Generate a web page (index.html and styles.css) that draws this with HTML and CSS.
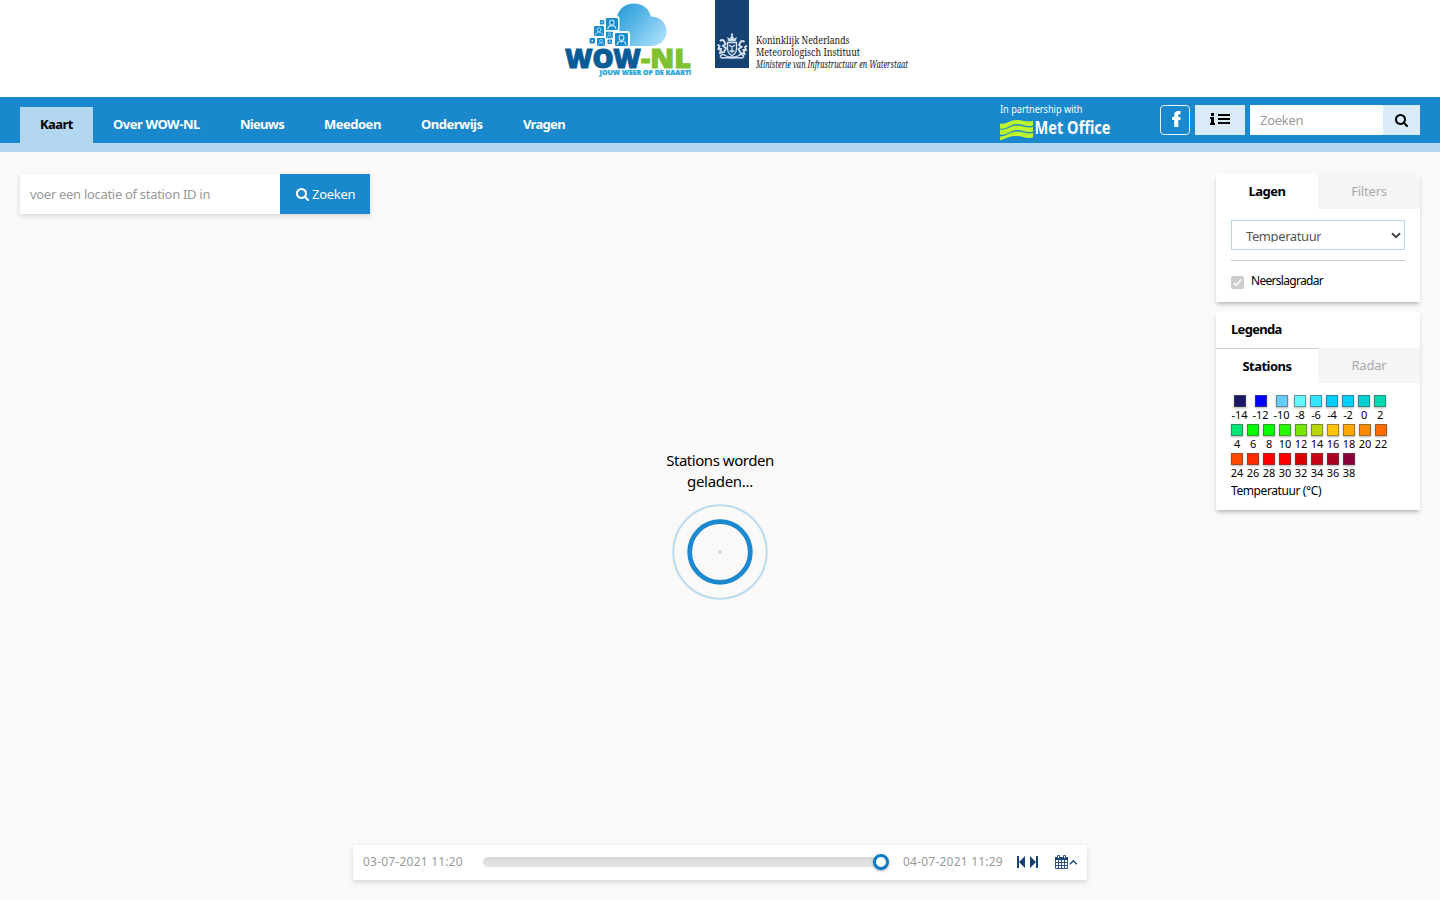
FILE: index.html
```html
<!DOCTYPE html>
<html lang="nl">
<head>
<meta charset="utf-8">
<title>WOW-NL</title>
<link rel="stylesheet" href="styles.css">
</head>
<body>
<svg width="0" height="0" class="defs" aria-hidden="true">
  <defs>
    <symbol id="search" viewBox="0 128 1664 1664"><path d="M1152 832q0-185-131.5-316.5t-316.5-131.5-316.5 131.5-131.5 316.5 131.5 316.5 316.5 131.5 316.5-131.5 131.5-316.5zm512 832q0 52-38 90t-90 38q-54 0-90-38l-343-342q-179 124-399 124-143 0-273.5-55.5t-225-150-150-225-55.5-273.5 55.5-273.5 150-225 225-150 273.5-55.5 273.5 55.5 225 150 150 225 55.5 273.5q0 220-124 399l343 343q37 37 37 90z"/></symbol>
    <symbol id="person" viewBox="0 0 12 12"><rect width="12" height="12" rx="1.2" fill="#1a8bcd"/><g fill="none" stroke="#c4e8f9" stroke-width="1"><ellipse cx="6" cy="4.400" rx="2.200" ry="2.500"/><path d="M2 11c0-2.600 1.500-3.300 3-3.700l1 .9 1-.9c1.500.4 3 1.100 3 3.700"/></g></symbol>
  </defs>
</svg>
<header class="brand">
  <svg class="logo-wow" width="134" height="84" viewBox="0 0 134 84">
    <defs><linearGradient id="sky" x1="0" y1="0" x2="1" y2=".7"><stop offset="0" stop-color="#2295d2"/><stop offset=".5" stop-color="#5bb8e7"/><stop offset="1" stop-color="#a4dcfb"/></linearGradient></defs>
    <path d="M54 46h36c9 0 15.500-6.500 15.500-14.500C105.500 23 99 16.500 90 16.500 88 8.500 81.500 3.500 73 3.500c-9 0-16 6-17 14z" fill="url(#sky)"/>
    <path d="M40 16h15.500q3 0 3 3v12H66q3 0 3 3v12H40z" fill="#fff"/>
    <use href="#person" x="44.700" y="18" width="12.300" height="12.300"/>
    <use href="#person" x="33" y="26" width="10" height="10"/>
    <use href="#person" x="54" y="33" width="13" height="13"/>
    <use href="#person" x="36" y="38" width="8" height="8"/>
    <use href="#person" x="44.900" y="31.500" width="7" height="7"/>
    <g fill="#1a8bcd"><rect x="38.800" y="20" width="4.500" height="4.500" rx="1"/><rect x="28.500" y="38" width="5.500" height="5.500" rx="1"/><rect x="46.500" y="39.500" width="4.500" height="4.500" rx="1"/></g>
    <g fill="#c4e8f9"><rect x="40.300" y="21.500" width="1.500" height="1.500"/><rect x="30.500" y="40" width="1.500" height="1.500"/><rect x="48" y="41" width="1.500" height="1.500"/></g>
    <g class="logo-word"><text x="4" y="68.200" textLength="76" lengthAdjust="spacingAndGlyphs" fill="#075b96" stroke="#075b96">WOW</text><text x="80" y="68.200" textLength="50" lengthAdjust="spacingAndGlyphs" fill="#7fc231" stroke="#7fc231">-NL</text></g>
    <text class="logo-tag" x="38.500" y="75" textLength="91.500" lengthAdjust="spacingAndGlyphs">JOUW WEER OP DE KAART!</text>
  </svg>
  <svg class="logo-knmi" width="210" height="80" viewBox="0 0 210 80">
    <path d="M0 0h34v68H0z" fill="#174374"/>
    <g fill="none" stroke="#d5e1ef" stroke-width="1.300">
      <path d="M12.500 42.500h9v6q0 5-4.500 7-4.500-2-4.500-7z"/>
      <path d="M14 45l3 2 3-2m-3 2v6m-2.500-2h5"/>
      <path d="M5 56q3-3 6 0 3 1 6 1t6-1q3-3 6 0m-24 0l1.500 2q5-.5 10.500 0 5.500-.5 10.500 0l1.500-2"/>
      <path d="M5 41q2-2 4 0l1.500 3-2.500 2 3 2-2 4-4 1 1-4-2.500 0 1-3-2-1.500m27-2.500q-2-2-4 0l-1.500 3 2.500 2-3 2 2 4 4 1-1-4 2.500 0-1-3 2-1.500" stroke-width="1.900"/>
      <path d="M13.500 41l-1-3.500 2.500 1.500 2-4 2 4 2.500-1.500-1 3.500z" fill="#d5e1ef" stroke-width=".6"/>
      <path d="M17 33v3m-1.200-1.500h2.400" stroke-width="1"/>
    </g>
    <g class="knmi-text">
      <text x="41" y="44.200" textLength="93.500" lengthAdjust="spacingAndGlyphs">Koninklijk Nederlands</text>
      <text x="41" y="56" textLength="104" lengthAdjust="spacingAndGlyphs">Meteorologisch Instituut</text>
      <text x="41" y="67.500" font-style="italic" textLength="152" lengthAdjust="spacingAndGlyphs">Ministerie van Infrastructuur en Waterstaat</text>
    </g>
  </svg>
</header>
<nav class="navbar">
  <div class="menu">
    <a class="tab active w33">Kaart</a><a class="tab w87">Over WOW-NL</a><a class="tab w44">Nieuws</a><a class="tab w57">Meedoen</a><a class="tab w62">Onderwijs</a><a class="tab w42">Vragen</a>
  </div>
  <div class="tools">
    <svg class="metoffice" width="120" height="38" viewBox="0 0 120 38">
      <text class="met-small" x="0" y="8" textLength="82.500" lengthAdjust="spacingAndGlyphs">In partnership with</text>
      <path d="M0 18.500C6 20 9 15 17 15c6 0 9 2.500 16 1v4.500c-7 2-10-1.500-16-1.500-7 0-10 6-17 4.500zm0 6C7 26 9 20.500 17 20.500c6 0 9 3 16 1.500v4.500c-7 2-10-1.500-16-1.500-7 0-10 6-17 4.500zm0 7C7 31.500 9 26.500 17 26.500c6 0 9 3 16 1.500v4.500c-7 2-10-1.500-16-1.500-7 0-10 2-17 4.500z" fill="#bdf52c"/>
      <text class="met-big" x="34.500" y="29" textLength="76" lengthAdjust="spacingAndGlyphs">Met Office</text>
    </svg>
    <a class="facebook"><svg width="9" height="16" viewBox="0 0 9 16"><path d="M8.500 0v3.200H7Q6.300 3.200 6.300 4.300V6h2.200v3H6.300v7H2.200V9H0V6h2.200V4Q2.200 0 6.200 0z"/></svg></a>
    <a class="info"><svg width="21" height="12" viewBox="0 0 21 12"><path d="M1 0h3v3H1zM0 4h4v6h1v2H0v-2h1V6H0zM8 1h12v2H8zM8 5h12v2H8zM8 9h12v2H8z"/></svg></a>
    <div class="sitesearch"><span class="hint">Zoeken</span><a class="go"><svg width="13" height="13"><use href="#search"/></svg></a></div>
  </div>
</nav>
<main class="map">
  <div class="location">
    <div class="field">voer een locatie of station ID in</div>
    <div class="button"><svg width="13" height="13"><use href="#search"/></svg><span>Zoeken</span></div>
  </div>
  <div class="loader">
    <p><span class="ln1">Stations worden</span><br><span class="ln2">geladen...</span></p>
    <svg width="96" height="96" viewBox="0 0 96 96" fill="none"><circle cx="48" cy="48" r="46.700" stroke="#bbdaef" stroke-width="2"/><circle cx="48" cy="48" r="30.300" stroke="#1b88cf" stroke-width="4.800"/><circle cx="48" cy="48" r="1.900" fill="#bedcef"/></svg>
  </div>
  <aside class="side">
    <section class="card layers">
      <div class="tabs"><span class="on">Lagen</span><span class="off">Filters</span></div>
      <div class="body">
        <div class="select"><span>Temperatuur</span><svg width="10" height="7" viewBox="0 0 10 7"><path d="M1 1.200l4 4 4-4" fill="none" stroke="#444" stroke-width="2"/></svg></div>
        <div class="check"><svg width="13" height="13" viewBox="0 0 13 13"><rect width="13" height="13" rx="2" fill="#ccc"/><path d="M2.800 6.800l2.500 2.500 5-6" fill="none" stroke="#f4f4f4" stroke-width="1.800"/></svg><span>Neerslagradar</span></div>
      </div>
    </section>
    <section class="card legend">
      <h2>Legenda</h2>
      <div class="tabs"><span class="on line">Stations</span><span class="off">Radar</span></div>
      <div class="scale">
        <div class="row"><i class="wide c1">-14</i><i class="wide c2">-12</i><i class="wide c3">-10</i><i class="c4">-8</i><i class="c5">-6</i><i class="c6">-4</i><i class="c7">-2</i><i class="c8">0</i><i class="c9">2</i></div>
        <div class="row"><i class="c10">4</i><i class="c11">6</i><i class="c12">8</i><i class="c13">10</i><i class="c14">12</i><i class="c15">14</i><i class="c16">16</i><i class="c17">18</i><i class="c18">20</i><i class="c19">22</i></div>
        <div class="row"><i class="c20">24</i><i class="c21">26</i><i class="c22">28</i><i class="c23">30</i><i class="c24">32</i><i class="c25">34</i><i class="c26">36</i><i class="c27">38</i></div>
        <p class="unit">Temperatuur (°C)</p>
      </div>
    </section>
  </aside>
  <div class="timeline">
    <span class="time">03-07-2021 11:20</span>
    <div class="track"><b class="knob"></b></div>
    <span class="time">04-07-2021 11:29</span>
    <svg class="steps" width="22" height="12" viewBox="0 0 22 12"><path d="M0 0h2v12H0zM8 0v12L2 6zM13 0v12l6-6zM19 0h2v12h-2z"/></svg>
    <svg class="calendar" width="23" height="14" viewBox="0 0 23 14"><path d="M.5 3.500v10h12v-10zM.5 7.500h12M.5 10.500h12M3.500 5v8.500M6.500 5v8.500M9.500 5v8.500" fill="none" stroke="#174374" stroke-width=".9"/><path d="M0 2h13v3H0z" fill="#174374"/><path d="M2.500.5h2v3h-2zM8.500.5h2v3h-2z" fill="#fff" stroke="#174374" stroke-width=".9"/><path d="M14.800 9.200l3.500-3.500 3.500 3.500" fill="none" stroke="#174374" stroke-width="1.300"/></svg>
  </div>
</main>
</body>
</html>
```
FILE: styles.css
```css
* { box-sizing: border-box; }
body { margin: 0; height: 900px; overflow: hidden; display: flex; flex-direction: column; background: #faf9f7; font: 13px/20px "Noto Sans", sans-serif; color: #000; }
p, h2 { margin: 0; }
svg { display: block; flex: none; overflow: visible; }
.defs { position: absolute; }
.brand { height: 97px; flex: none; background: #fff; display: flex; padding-left: 561px; gap: 20px; }
.logo-word { font: 900 27px "Noto Sans", sans-serif; stroke-width: 1; }
.logo-tag { font: 900 6.500px "Noto Sans", sans-serif; fill: #29a5df; stroke: #29a5df; stroke-width: .2; }
.knmi-text { font: 10.500px "Noto Serif", "Liberation Serif", serif; fill: #222; }

.navbar { height: 55px; flex: none; background: #1a88cd; border-bottom: 9px solid #b3d7ef; display: flex; justify-content: space-between; padding: 0 20px; }
.menu { display: flex; padding-top: 10px; }
.tab { color: #fff; font-weight: bold; height: 36px; line-height: 35px; padding: 0 20px; box-sizing: content-box; white-space: nowrap; }
.active { color: #000; background: #b3d7ef; }
.w33 { width: 33px; letter-spacing: -.55px; }
.w87 { width: 87px; letter-spacing: -.45px; }
.w44 { width: 44px; letter-spacing: -.7px; }
.w57 { width: 57px; letter-spacing: -.5px; }
.w62 { width: 62px; letter-spacing: -.5px; }
.w42 { width: 42px; letter-spacing: -.7px; }
.tools { display: flex; padding-top: 8px; }
.metoffice { margin-right: 40px; fill: #fff; }
.met-small { font: 10px "Noto Sans", sans-serif; }
.met-big { font: bold 17px "Noto Sans", sans-serif; }
.facebook { width: 30px; height: 30px; border: 1.500px solid #e8f4fb; border-radius: 4px; margin-right: 5px; padding: 5px 0 0 11px; fill: #fff; }
.info { width: 50px; height: 30px; background: #d9ebf7; margin-right: 5px; padding: 8px 0 0 15px; }
.sitesearch { width: 170px; height: 30px; background: #fff; display: flex; justify-content: space-between; }
.hint { color: #999; line-height: 31px; padding-left: 10px; letter-spacing: -.3px; }
.go { width: 37px; background: #d9ebf7; padding: 9px 0 0 12px; }

.map { flex: 1; display: grid; grid-template-columns: 350px 1fr 204px; grid-template-rows: 671px 35px; padding: 22px 20px 20px; }
.location { display: flex; width: 350px; height: 40px; box-shadow: 0 2px 5px rgba(0,0,0,.15); }
.field { width: 260px; background: #fff; color: #999; line-height: 41px; padding-left: 10px; letter-spacing: -.3px; white-space: nowrap; }
.button { width: 90px; background: #1a88cd; color: #fff; fill: #fff; display: flex; align-items: center; padding-left: 16px; gap: 3px; letter-spacing: -.3px; }
.loader { padding: 276px 0 0 217px; width: 483px; display: flex; flex-direction: column; align-items: center; text-align: center; font-size: 15px; line-height: 21px; gap: 12px; }
.ln1 { letter-spacing: -.45px; }
.ln2 { letter-spacing: -.3px; }

.side { display: flex; flex-direction: column; gap: 10px; }
.card { background: #fff; box-shadow: 0 3px 4px -1px rgba(0,0,0,.28); }
.layers { height: 128px; }
.legend { height: 198px; }
.tabs { display: flex; height: 35px; line-height: 35px; text-align: center; }
.tabs span { width: 102px; }
.on { font-weight: bold; letter-spacing: -.5px; }
.line { border-top: 1px solid #ccc; }
.off { background: #f5f5f5; color: #aaa; letter-spacing: -.2px; }
.body { padding: 11px 15px 0; }
.select { height: 30px; border: 1px solid #b3d7ef; display: flex; justify-content: space-between; padding: 11px 3px 0 14px; color: #555; }
.select span { line-height: 20px; margin-top: -6px; height: 16px; overflow: hidden; letter-spacing: -.4px; }
.check { border-top: 1px solid #ccc; margin-top: 10px; padding-top: 10px; display: flex; gap: 7px; font-size: 12px; letter-spacing: -.7px; }
.check svg { margin-top: 5px; }
.legend h2 { font-size: 13px; line-height: 35px; height: 36px; padding-left: 15px; letter-spacing: -.7px; }
.scale { padding: 12px 15px 0; }
.row { display: flex; height: 29px; }
.row i { width: 16px; margin-left: -2px; font: 11px/16px "Noto Sans", sans-serif; display: flex; flex-direction: column; align-items: center; letter-spacing: -.1px; }
.row i + i { margin-left: 0; }
.row i.wide { width: 21px; }
.row i::before { content: ""; box-sizing: border-box; width: 12px; height: 12px; flex: none; background: var(--c); border: 1px solid rgba(80,80,80,.55); box-shadow: 0 1px 2px rgba(0,0,0,.3); }
.unit { font-size: 12px; line-height: 18px; letter-spacing: -.4px; }
.c1{--c:#191966}.c2{--c:#00f}.c3{--c:#66ccff}.c4{--c:#66f5ff}.c5{--c:#33e4ff}.c6{--c:#0cf}.c7{--c:#00d0ff}.c8{--c:#00ced1}.c9{--c:#00d9b0}
.c10{--c:#00e673}.c11{--c:#0f0}.c12{--c:#0f0}.c13{--c:#2bf900}.c14{--c:#77e600}.c15{--c:#b9d600}.c16{--c:#ffc400}.c17{--c:#ffa800}.c18{--c:#ff8c00}.c19{--c:#ff6a00}
.c20{--c:#ff4b00}.c21{--c:#ff2a00}.c22{--c:#f00}.c23{--c:#f00}.c24{--c:#d90000}.c25{--c:#c80013}.c26{--c:#aa0022}.c27{--c:#8b0037}

.timeline { grid-column: 1 / -1; justify-self: center; width: 734px; height: 35px; background: #fff; box-shadow: 0 2px 5px rgba(0,0,0,.15); display: flex; align-items: center; padding: 0 0 1px 10px; color: #999; fill: #174374; }
.time { width: 100px; font-size: 12px; line-height: 34px; height: 34px; white-space: nowrap; letter-spacing: .22px; }
.track { width: 400px; height: 10px; margin: 0 20px; border-radius: 5px; background: linear-gradient(#d8d8d8, #e6e6e6); display: flex; justify-content: flex-end; align-items: center; }
.knob { width: 16px; height: 16px; margin-right: -6px; border: 3px solid #0b7bc4; border-radius: 50%; background: #fff; box-shadow: 0 1px 3px rgba(0,0,0,.3); }
.steps { margin-left: 14px; }
.calendar { margin-left: 16px; }
```
